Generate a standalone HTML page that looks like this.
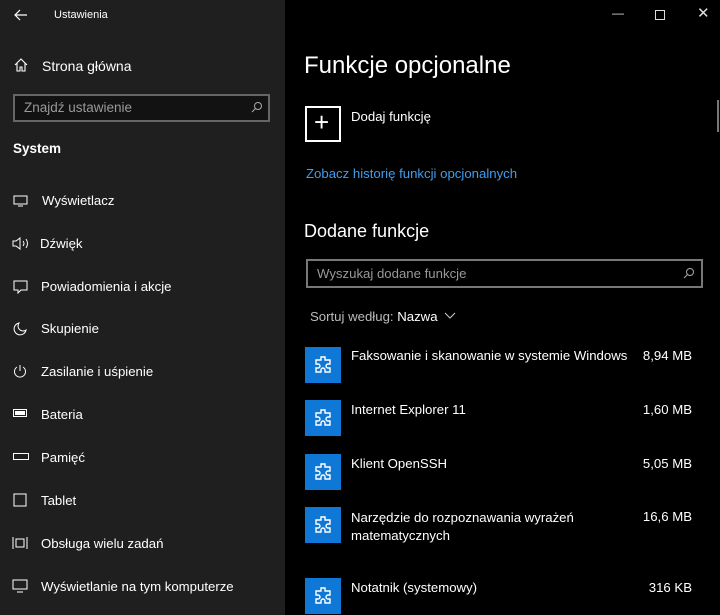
<!DOCTYPE html>
<html><head><meta charset="utf-8"><style>
*{margin:0;padding:0;box-sizing:border-box}
body{width:720px;height:615px;background:#000;font-family:"Liberation Sans",sans-serif;color:#fff;position:relative;overflow:hidden}
.side{position:absolute;left:0;top:0;width:285px;height:615px;background:#1f1f1f}
.a{position:absolute;white-space:nowrap}
.nav{font-size:13.2px;color:#fff}
.tile{position:absolute;left:305px;width:36px;height:36px;background:#0f78d7}
.tile svg{position:absolute;left:8px;top:8px}
.name{left:351px;font-size:13.2px}
.size{right:28px;font-size:13.2px;text-align:right}
</style></head><body>
<div class="side"></div>
<svg class="a" style="left:14px;top:9px" width="14" height="12" viewBox="0 0 14 12"><path d="M6 1L1 6l5 5M1 6h12" stroke="#fff" fill="none" stroke-width="1.2"/></svg>
<div class="a" style="left:54px;top:9px;font-size:11px">Ustawienia</div>
<svg class="a" style="left:14px;top:58px" width="14" height="14" viewBox="0 0 14 14"><path d="M1 7L7 1l6 6M3 5v8h3V9h2v4h3V5" stroke="#fff" fill="none" stroke-width="1.1"/></svg>
<div class="a nav" style="left:42px;top:58px;font-size:14px">Strona główna</div>
<div class="a" style="left:13px;top:94px;width:257px;height:28px;border:2px solid #666;background:#121212"></div>
<div class="a" style="left:24px;top:100px;font-size:13.5px;color:#999">Znajdź ustawienie</div>
<svg class="a" style="left:251px;top:101px" width="12" height="12" viewBox="0 0 12 12"><circle cx="7" cy="5" r="3.5" stroke="#aaa" fill="none"/><path d="M4.5 7.5L1 11" stroke="#aaa"/></svg>
<div class="a" style="left:13px;top:141px;font-size:13.5px;font-weight:bold">System</div>

<svg class="a" style="left:13px;top:195px" width="16" height="12" viewBox="0 0 16 12"><rect x="1" y="1" width="13" height="8" stroke="#fff" fill="none"/><path d="M5 11h5" stroke="#fff"/></svg>
<div class="a nav" style="left:42px;top:193px">Wyświetlacz</div>
<svg class="a" style="left:12px;top:237px" width="18" height="13" viewBox="0 0 18 13"><path d="M1 4h3l4-3v11l-4-3H1z" stroke="#fff" fill="none"/><path d="M11 4q2 2.5 0 5M14 2q3 4.5 0 9" stroke="#fff" fill="none"/></svg>
<div class="a nav" style="left:40px;top:236px">Dźwięk</div>
<svg class="a" style="left:13px;top:280px" width="16" height="14" viewBox="0 0 16 14"><path d="M1 1h13v9H8l-3 3v-3H1z" stroke="#fff" fill="none"/></svg>
<div class="a nav" style="left:41px;top:279px">Powiadomienia i akcje</div>
<svg class="a" style="left:13px;top:322px" width="14" height="14" viewBox="0 0 14 14"><path d="M6 1a6 6 0 1 0 7 7A5 5 0 0 1 6 1z" stroke="#fff" fill="none"/></svg>
<div class="a nav" style="left:41px;top:321px">Skupienie</div>
<svg class="a" style="left:13px;top:364px" width="14" height="14" viewBox="0 0 14 14"><path d="M4 3a5.5 5.5 0 1 0 6 0M7 1v6" stroke="#fff" fill="none"/></svg>
<div class="a nav" style="left:41px;top:364px">Zasilanie i uśpienie</div>
<svg class="a" style="left:13px;top:409px" width="16" height="8" viewBox="0 0 16 8"><rect x="0.5" y="0.5" width="13" height="7" stroke="#fff" fill="none"/><rect x="2" y="2" width="10" height="4" fill="#fff"/></svg>
<div class="a nav" style="left:41px;top:407px">Bateria</div>
<svg class="a" style="left:13px;top:453px" width="16" height="7" viewBox="0 0 16 7"><rect x="0.5" y="0.5" width="15" height="6" stroke="#fff" fill="none"/></svg>
<div class="a nav" style="left:41px;top:450px">Pamięć</div>
<svg class="a" style="left:13px;top:493px" width="16" height="14" viewBox="0 0 16 14"><rect x="1" y="1" width="12" height="12" stroke="#fff" fill="none"/></svg>
<div class="a nav" style="left:41px;top:493px">Tablet</div>
<svg class="a" style="left:12px;top:536px" width="16" height="14" viewBox="0 0 16 14"><rect x="4" y="3" width="8" height="8" stroke="#fff" fill="none"/><path d="M1 1v12M15 1v12" stroke="#fff"/></svg>
<div class="a nav" style="left:41px;top:536px">Obsługa wielu zadań</div>
<svg class="a" style="left:12px;top:579px" width="16" height="14" viewBox="0 0 16 14"><rect x="1" y="1" width="14" height="9" stroke="#fff" fill="none"/><path d="M5 13h6" stroke="#fff"/></svg>
<div class="a nav" style="left:41px;top:579px">Wyświetlanie na tym komputerze</div>

<div class="a" style="left:612px;top:6px;font-size:12px;color:#ddd">—</div>
<div class="a" style="left:655px;top:10px;width:10px;height:10px;border:1px solid #ddd"></div>
<div class="a" style="left:697px;top:4px;font-size:15px;color:#ddd">✕</div>
<div class="a" style="left:717px;top:100px;width:2px;height:32px;background:#777"></div>

<div class="a" style="left:304px;top:52px;font-size:24px">Funkcje opcjonalne</div>
<div class="a" style="left:305px;top:106px;width:36px;height:36px;border:2px solid #fff"></div>
<div class="a" style="left:314px;top:107px;font-size:26px;font-weight:300">+</div>
<div class="a" style="left:351px;top:109px;font-size:13.2px">Dodaj funkcję</div>
<div class="a" style="left:306px;top:166px;font-size:13.2px;color:#3f9ef0">Zobacz historię funkcji opcjonalnych</div>
<div class="a" style="left:304px;top:221px;font-size:18px">Dodane funkcje</div>
<div class="a" style="left:306px;top:259px;width:397px;height:29px;border:2px solid #777;background:#000"></div>
<div class="a" style="left:317px;top:266px;font-size:13.2px;color:#999">Wyszukaj dodane funkcje</div>
<svg class="a" style="left:683px;top:267px" width="12" height="12" viewBox="0 0 12 12"><circle cx="7" cy="5" r="3.5" stroke="#aaa" fill="none"/><path d="M4.5 7.5L1 11" stroke="#aaa"/></svg>
<div class="a" style="left:310px;top:309px;font-size:13.2px;color:#bbb">Sortuj według: <span style="color:#fff">Nazwa</span></div>
<svg class="a" style="left:444px;top:312px" width="12" height="8" viewBox="0 0 12 8"><path d="M1 1l5 5 5-5" stroke="#ccc" fill="none"/></svg>

<div class="tile" style="top:347px"><svg width="20" height="20" viewBox="0 0 20 20"><path d="M8 2h4v3h5v4h-2a2 2 0 0 0 0 4h2v4h-5v-2a2 2 0 0 0-4 0v2H3v-4h2a2 2 0 0 0 0-4H3V5h5z" stroke="#fff" fill="none" stroke-width="1.4"/></svg></div>
<div class="a name" style="top:348px">Faksowanie i skanowanie w systemie Windows</div><div class="a size" style="top:348px">8,94 MB</div>
<div class="tile" style="top:400px"><svg width="20" height="20" viewBox="0 0 20 20"><path d="M8 2h4v3h5v4h-2a2 2 0 0 0 0 4h2v4h-5v-2a2 2 0 0 0-4 0v2H3v-4h2a2 2 0 0 0 0-4H3V5h5z" stroke="#fff" fill="none" stroke-width="1.4"/></svg></div>
<div class="a name" style="top:402px">Internet Explorer 11</div><div class="a size" style="top:402px">1,60 MB</div>
<div class="tile" style="top:454px"><svg width="20" height="20" viewBox="0 0 20 20"><path d="M8 2h4v3h5v4h-2a2 2 0 0 0 0 4h2v4h-5v-2a2 2 0 0 0-4 0v2H3v-4h2a2 2 0 0 0 0-4H3V5h5z" stroke="#fff" fill="none" stroke-width="1.4"/></svg></div>
<div class="a name" style="top:456px">Klient OpenSSH</div><div class="a size" style="top:456px">5,05 MB</div>
<div class="tile" style="top:507px"><svg width="20" height="20" viewBox="0 0 20 20"><path d="M8 2h4v3h5v4h-2a2 2 0 0 0 0 4h2v4h-5v-2a2 2 0 0 0-4 0v2H3v-4h2a2 2 0 0 0 0-4H3V5h5z" stroke="#fff" fill="none" stroke-width="1.4"/></svg></div>
<div class="a name" style="top:509px;line-height:18px">Narzędzie do rozpoznawania wyrażeń<br>matematycznych</div><div class="a size" style="top:509px">16,6 MB</div>
<div class="tile" style="top:578px"><svg width="20" height="20" viewBox="0 0 20 20"><path d="M8 2h4v3h5v4h-2a2 2 0 0 0 0 4h2v4h-5v-2a2 2 0 0 0-4 0v2H3v-4h2a2 2 0 0 0 0-4H3V5h5z" stroke="#fff" fill="none" stroke-width="1.4"/></svg></div>
<div class="a name" style="top:580px">Notatnik (systemowy)</div><div class="a size" style="top:580px">316 KB</div>
</body></html>
